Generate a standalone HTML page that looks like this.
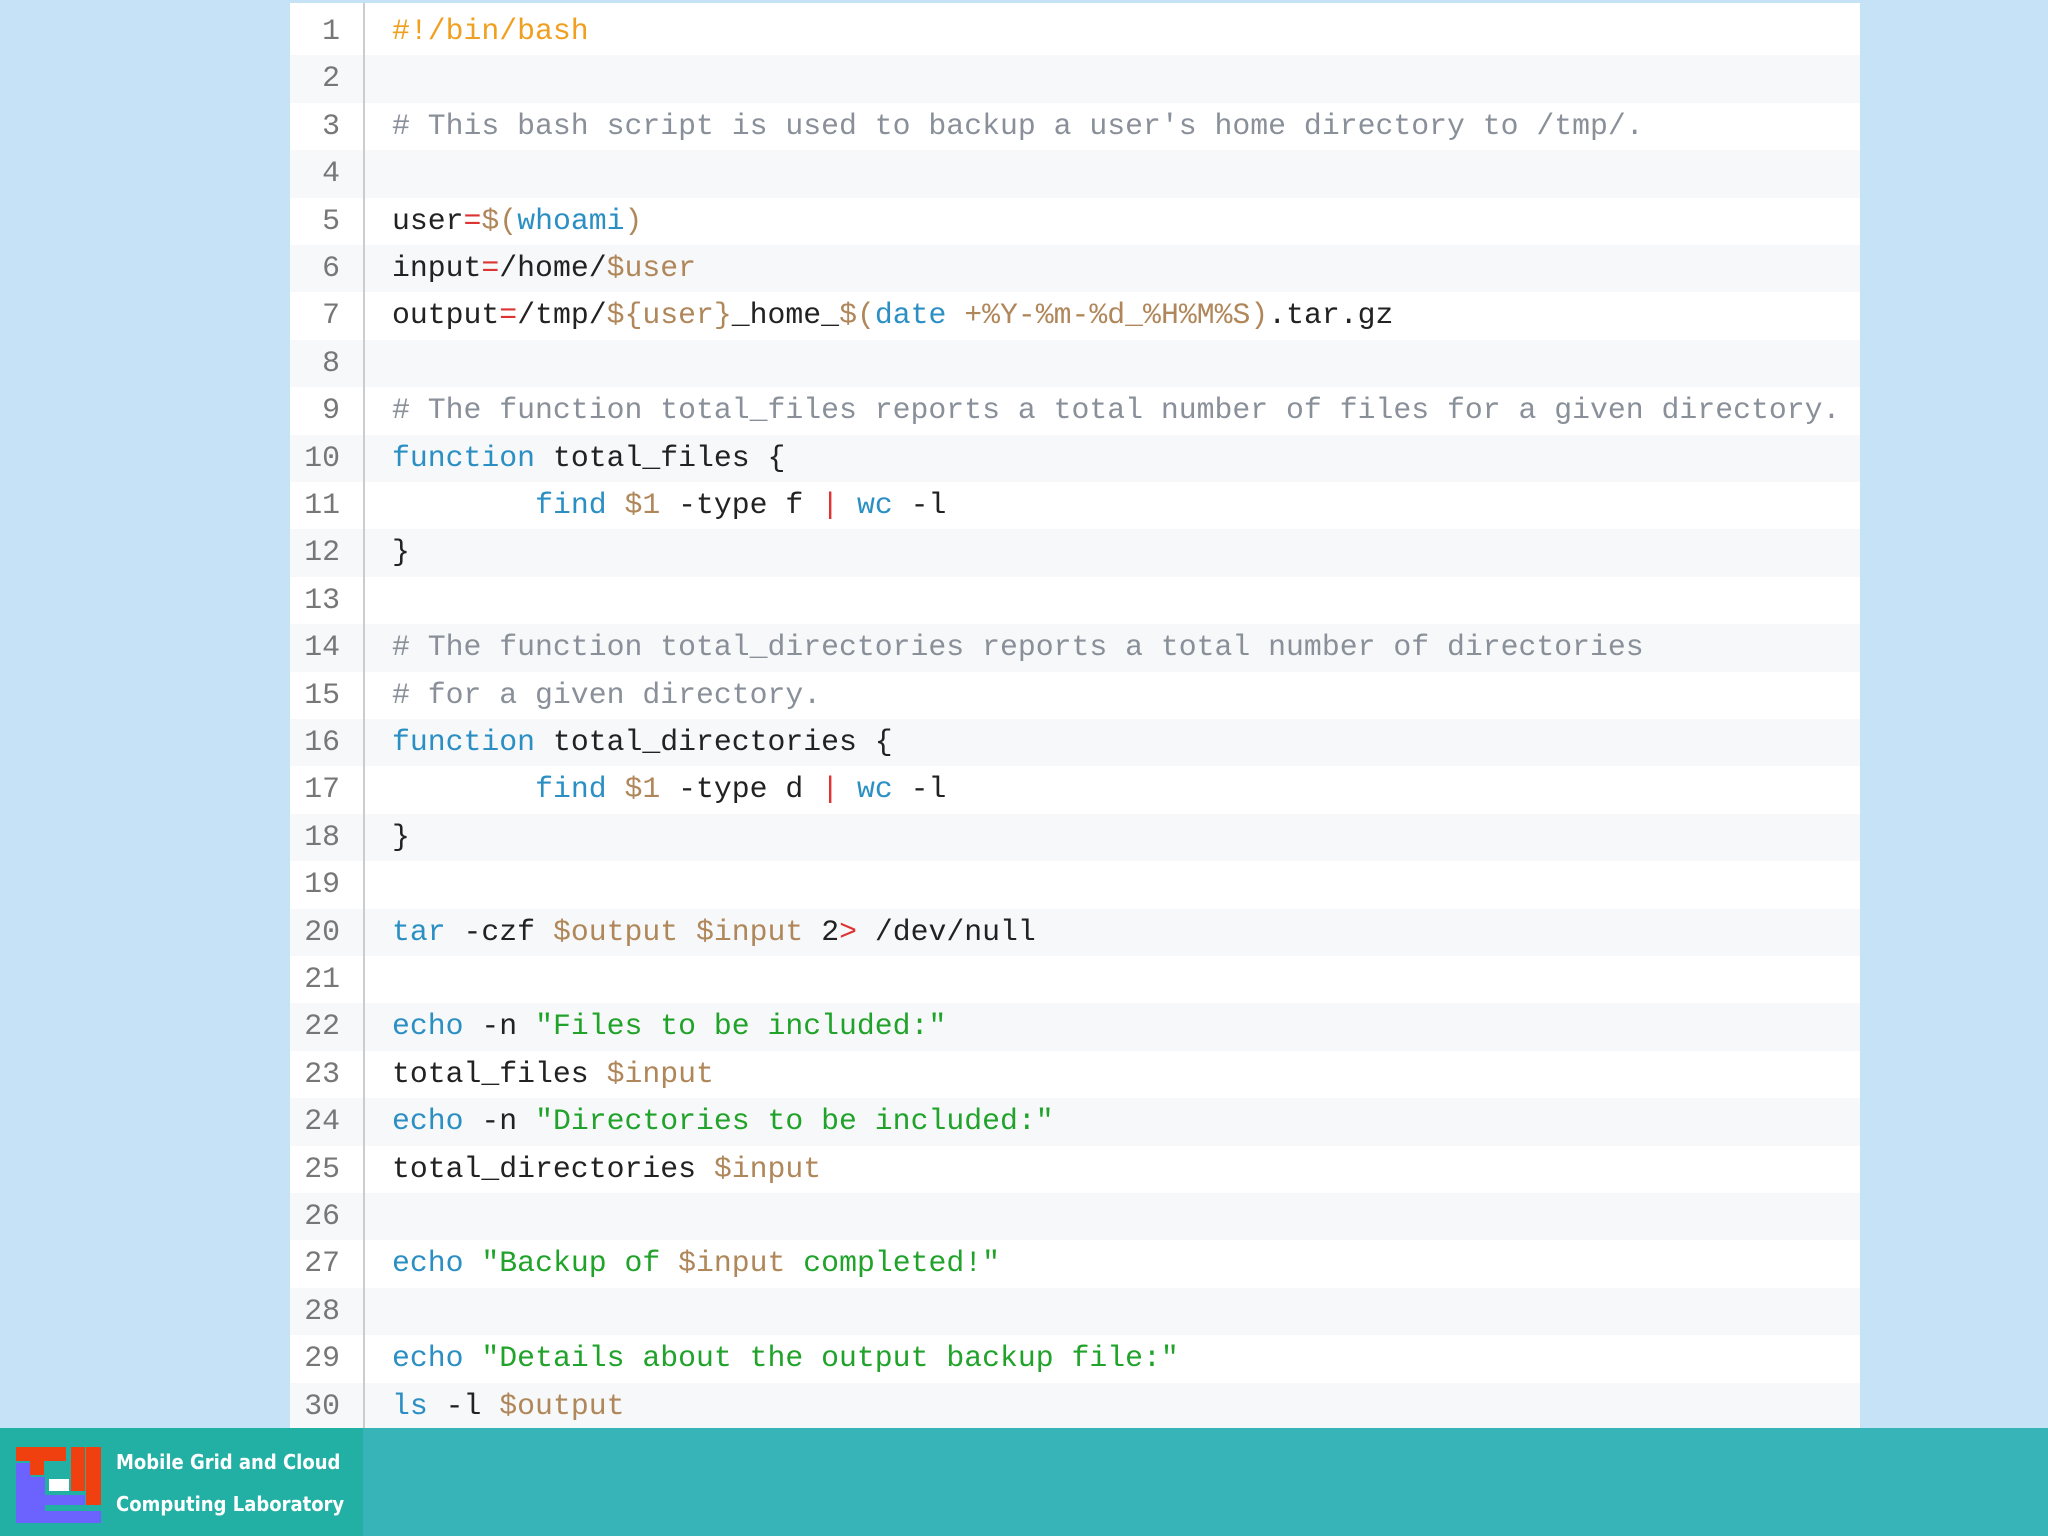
<!DOCTYPE html>
<html><head><meta charset="utf-8"><style>
body{margin:0;width:2048px;height:1536px;background:#c6e2f7;position:relative;overflow:hidden;font-family:"Liberation Mono",monospace}
#panel{position:absolute;left:290px;top:3px;width:1570px;height:1425px;background:#fff;overflow:hidden}
.row{position:absolute;left:0;width:1570px;height:47.4px;line-height:47.4px;font-size:29.8px;white-space:pre}
.row:nth-child(even){background:#f7f8f9}
.n{position:absolute;left:0;width:50px;text-align:right;color:#777}
.c{position:absolute;left:102px;color:#222}
#gut{position:absolute;left:73px;top:0;width:2px;height:1425px;background:#ccc}
.cm{color:#8a9099}.k{color:#2b8fc4}.v{color:#b0875a}.s{color:#21a32b}.r{color:#d33}.o{color:#f0a020}
#bar{position:absolute;left:0;top:1428px;width:2048px;height:108px;background:#37b4b8}
#barl{position:absolute;left:0;top:0;width:363px;height:108px;background:#22b0a5}
.t{position:absolute;left:116px;color:#fff;font-family:"DejaVu Sans Condensed","DejaVu Sans",sans-serif;font-weight:bold;font-size:20px;white-space:nowrap}
</style></head><body>
<div id="panel">
<div class="row" style="top:5px"><span class="n">1</span><span class="c"><span class="o">#!/bin/bash</span></span></div>
<div class="row" style="top:52.4px"><span class="n">2</span></div>
<div class="row" style="top:99.8px"><span class="n">3</span><span class="c cm"># This bash script is used to backup a user's home directory to /tmp/.</span></div>
<div class="row" style="top:147.2px"><span class="n">4</span></div>
<div class="row" style="top:194.6px"><span class="n">5</span><span class="c">user<span class="r">=</span><span class="v">$(</span><span class="k">whoami</span><span class="v">)</span></span></div>
<div class="row" style="top:242px"><span class="n">6</span><span class="c">input<span class="r">=</span>/home/<span class="v">$user</span></span></div>
<div class="row" style="top:289.4px"><span class="n">7</span><span class="c">output<span class="r">=</span>/tmp/<span class="v">${user}</span>_home_<span class="v">$(</span><span class="k">date</span> <span class="v">+%Y-%m-%d_%H%M%S)</span>.tar.gz</span></div>
<div class="row" style="top:336.8px"><span class="n">8</span></div>
<div class="row" style="top:384.2px"><span class="n">9</span><span class="c cm"># The function total_files reports a total number of files for a given directory.</span></div>
<div class="row" style="top:431.6px"><span class="n">10</span><span class="c"><span class="k">function</span> total_files {</span></div>
<div class="row" style="top:479px"><span class="n">11</span><span class="c">        <span class="k">find</span> <span class="v">$1</span> -type f <span class="r">|</span> <span class="k">wc</span> -l</span></div>
<div class="row" style="top:526.4px"><span class="n">12</span><span class="c">}</span></div>
<div class="row" style="top:573.8px"><span class="n">13</span></div>
<div class="row" style="top:621.2px"><span class="n">14</span><span class="c cm"># The function total_directories reports a total number of directories</span></div>
<div class="row" style="top:668.6px"><span class="n">15</span><span class="c cm"># for a given directory.</span></div>
<div class="row" style="top:716px"><span class="n">16</span><span class="c"><span class="k">function</span> total_directories {</span></div>
<div class="row" style="top:763.4px"><span class="n">17</span><span class="c">        <span class="k">find</span> <span class="v">$1</span> -type d <span class="r">|</span> <span class="k">wc</span> -l</span></div>
<div class="row" style="top:810.8px"><span class="n">18</span><span class="c">}</span></div>
<div class="row" style="top:858.2px"><span class="n">19</span></div>
<div class="row" style="top:905.6px"><span class="n">20</span><span class="c"><span class="k">tar</span> -czf <span class="v">$output</span> <span class="v">$input</span> 2<span class="r">&gt;</span> /dev/null</span></div>
<div class="row" style="top:953px"><span class="n">21</span></div>
<div class="row" style="top:1000.4px"><span class="n">22</span><span class="c"><span class="k">echo</span> -n <span class="s">"Files to be included:"</span></span></div>
<div class="row" style="top:1047.8px"><span class="n">23</span><span class="c">total_files <span class="v">$input</span></span></div>
<div class="row" style="top:1095.2px"><span class="n">24</span><span class="c"><span class="k">echo</span> -n <span class="s">"Directories to be included:"</span></span></div>
<div class="row" style="top:1142.6px"><span class="n">25</span><span class="c">total_directories <span class="v">$input</span></span></div>
<div class="row" style="top:1190px"><span class="n">26</span></div>
<div class="row" style="top:1237.4px"><span class="n">27</span><span class="c"><span class="k">echo</span> <span class="s">"Backup of <span class="v">$input</span> completed!"</span></span></div>
<div class="row" style="top:1284.8px"><span class="n">28</span></div>
<div class="row" style="top:1332.2px"><span class="n">29</span><span class="c"><span class="k">echo</span> <span class="s">"Details about the output backup file:"</span></span></div>
<div class="row" style="top:1379.6px"><span class="n">30</span><span class="c"><span class="k">ls</span> -l <span class="v">$output</span></span></div>
<div id="gut"></div>
</div>
<div id="bar"><div id="barl">
<svg style="position:absolute;left:16px;top:19px" width="86" height="76" viewBox="0 0 86 76">
<rect x="0" y="16" width="15" height="60" fill="#6c63ff"/>
<rect x="15" y="64" width="70" height="12" fill="#6c63ff"/>
<rect x="15" y="30" width="14" height="34" fill="#6c63ff"/>
<rect x="29" y="48" width="40" height="10" fill="#6c63ff"/>
<rect x="33" y="32" width="20" height="12" fill="#fff"/>
<rect x="0" y="0" width="50" height="14" fill="#f04010"/>
<rect x="14" y="14" width="14" height="14" fill="#f04010"/>
<rect x="55" y="0" width="14" height="44" fill="#f04010"/>
<rect x="70" y="0" width="15" height="58" fill="#f04010"/>
</svg>
<div class="t" style="top:22px">Mobile Grid and Cloud</div>
<div class="t" style="top:64px">Computing Laboratory</div>
</div></div>
</body></html>
